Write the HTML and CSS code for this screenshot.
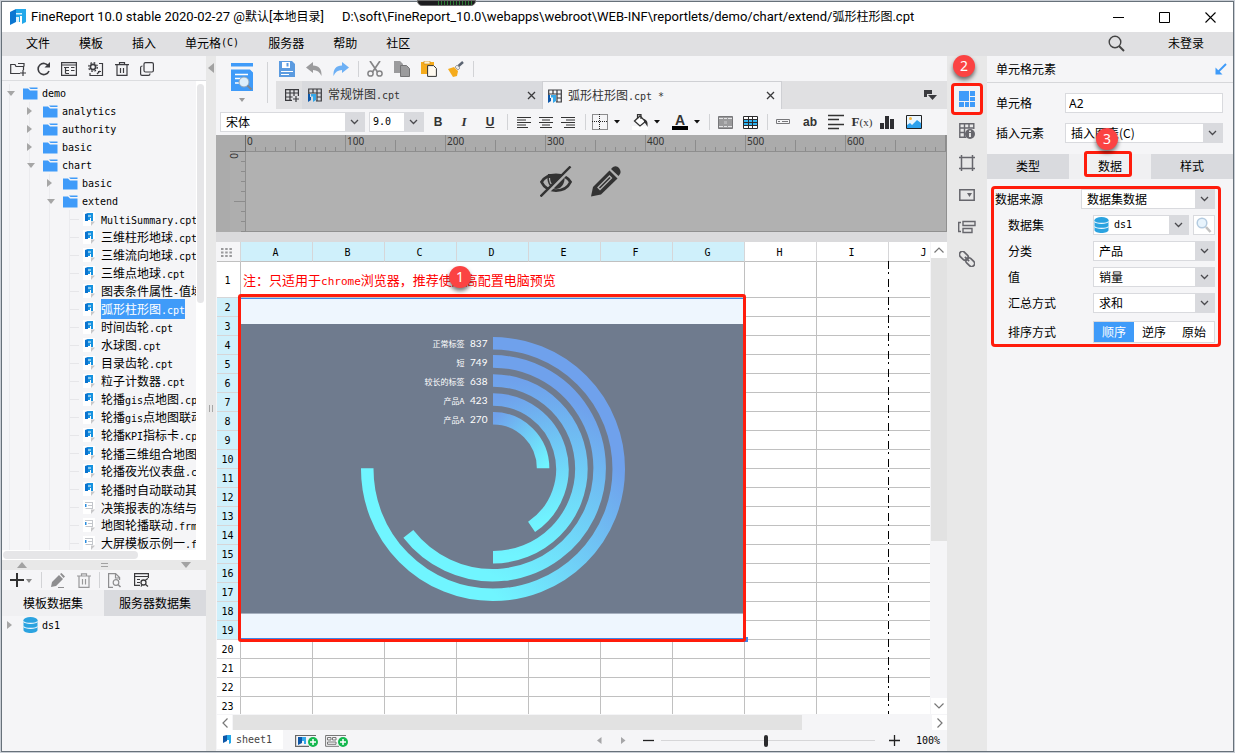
FILE: index.html
```html
<!DOCTYPE html>
<html lang="zh-CN">
<head>
<meta charset="utf-8">
<title>FineReport 10.0</title>
<link rel="stylesheet" href="styles.css">
</head>
<body>
<svg class="defs" aria-hidden="true">
  <symbol id="folder" viewBox="0 0 15 13"><path d="M0 1.500h5l2 2h7.500V12.500H0z" fill="#3f9bf9"/><path d="M6 .500h8.500v1.500H7.500z" fill="#3f9bf9"/></symbol>
  <symbol id="open" viewBox="0 0 8 5"><path d="M0 0h8L4 5z" fill="#a6a6a6"/></symbol>
  <symbol id="closed" viewBox="0 0 5 8"><path d="M0 0v8l5-4z" fill="#a6a6a6"/></symbol>
  <symbol id="cpt" viewBox="0 0 14 14"><path d="M0 0h12v9l-4 5H0z" fill="#fff"/><path d="M12 9.500H8V14z" fill="#c6c6c8"/><path d="M2 2l3-1v8H2z" fill="#0a74d0"/><path d="M5 1h5v8H8V6H7v2H5z" fill="#1592e0"/><path d="M5 3.500h3v1H5z" fill="#fff"/></symbol>
  <symbol id="frm" viewBox="0 0 14 14"><path d="M0 0h12v9l-4 5H0z" fill="#fff"/><path d="M12 9.500H8V14z" fill="#c6c6c8"/><path d="M2 2.500h8M2.500 8.500h7M9.500 3v6M5 5.500h4" stroke="#c3c6cb" fill="none"/><path d="M2 4h1.500v3H2z" fill="#2b8de0"/></symbol>
  <symbol id="chev" viewBox="0 0 9 6"><path d="M1 1l3.500 3.500L8 1" fill="none" stroke="#4a4a4e" stroke-width="1.300"/></symbol>
  <symbol id="x" viewBox="0 0 9 9"><path d="M1 1l7 7M8 1L1 8" stroke="#3a3a3c" stroke-width="1.300"/></symbol>
  <symbol id="drop" viewBox="0 0 6 4"><path d="M0 0h6L3 3.500z" fill="#111"/></symbol>
  <symbol id="sheetgrid" viewBox="0 0 14 14"><path d="M.700 6V1h12.600v12H8M.700 5h12.600M5 1v4M9 1v12M9 9h4" fill="none" stroke="#3a3a3e" stroke-width="1.200"/><path d="M0 6h2v3h1v3l-3 2z" fill="#0d57a8"/><path d="M3 6h5v6l-3 2V8.500H3z" fill="#35a8ea"/></symbol>
  <symbol id="db" viewBox="0 0 14 16"><path d="M0 3v10c0 4 14 4 14 0V3z" fill="#2ba3e0"/><ellipse cx="7" cy="3" rx="7" ry="3" fill="#2ba3e0"/><path d="M0 4.500c2 2.500 12 2.500 14 0M0 9.500c2 2.500 12 2.500 14 0" fill="none" stroke="#f0f8fd" stroke-width="1.100"/></symbol>
  <symbol id="logo" viewBox="0 0 16 16"><path d="M0 3l6-3v13l-6 3z" fill="#0b76d1"/><path d="M6 0h10v13l-4 2V7h-2v6H6z" fill="#23a8ea"/><path d="M6 4h6v1.500H6z" fill="#d9f1fd"/><path d="M6 8h3v8H6z" fill="#fff" opacity=".85"/></symbol>
  <symbol id="plusdot" viewBox="0 0 10 10"><circle cx="5" cy="5" r="5" fill="#14b84f"/><path d="M5 2v6M2 5h6" stroke="#fff" stroke-width="1.500"/></symbol>
</svg>

<div class="window">
  <header class="titlebar">
    <svg class="logo" width="16" height="16"><use href="#logo"/></svg>
    <h1 class="title"><span>FineReport 10.0 stable 2020-02-27 @<b>默认</b>[<b>本地目录</b>]</span><span>D:\soft\FineReport_10.0\webapps\webroot\WEB-INF\reportlets/demo/chart/extend/<b>弧形柱形图</b>.cpt</span></h1>
    <div class="winbtns">
      <button aria-label="最小化"><svg width="11" height="11"><path d="M0 5.500h11" stroke="#000"/></svg></button>
      <button aria-label="最大化"><svg width="11" height="11"><path d="M.500.500h10v10H.500z" fill="none" stroke="#000"/></svg></button>
      <button aria-label="关闭"><svg width="11" height="11"><path d="M.500.500l10 10M10.500.500l-10 10" stroke="#000" stroke-width="1.100"/></svg></button>
    </div>
    <div class="gadget"></div>
  </header>

  <nav class="menubar">
    <button>文件</button><button>模板</button><button>插入</button><button>单元格<span class="m">(C)</span></button><button>服务器</button><button>帮助</button><button>社区</button>
    <button class="search" aria-label="搜索"><svg width="17" height="17"><circle cx="7" cy="7" r="5.800" fill="none" stroke="#444" stroke-width="1.400"/><path d="M11 11l5 5" stroke="#444" stroke-width="2"/></svg></button>
    <button class="login">未登录</button>
  </nav>

  <div class="main">
    <aside class="left">
      <div class="tools top">
        <button aria-label="新建文件夹"><svg width="16" height="14"><path d="M10 11.500H.700V2.500H5l1 2h7.500V8M8 1.500h6v3M13 8v6M10 11h6" fill="none" stroke="#3c3c40" stroke-width="1.200"/></svg></button>
        <button aria-label="刷新"><svg width="13" height="14"><path d="M11.500 4A5.600 5.600 0 1 0 12 9" fill="none" stroke="#3c3c40" stroke-width="1.600"/><path d="M13 0v5.500H7.500z" fill="#3c3c40"/></svg></button>
        <button aria-label="文件"><svg width="16" height="14"><path d="M.600.600h14.800v12.800H.600zM.600 3h14.800M3 5.500h5M4.500 5.500v6M4.500 8.500H8M4.500 11.500H8M10 5.500h3.500M10 8.500h3.500" fill="none" stroke="#3c3c40" stroke-width="1.200"/></svg></button>
        <button aria-label="设置"><svg width="16" height="14"><circle cx="5" cy="5" r="2.600" fill="none" stroke="#3c3c40" stroke-width="1.600"/><circle cx="5" cy="5" r="4.300" fill="none" stroke="#3c3c40" stroke-width="1.300" stroke-dasharray="1.700 1.700"/><path d="M11 1.500h3.500v12H2V11M10 9.500h3M9 12l3-3" fill="none" stroke="#3c3c40" stroke-width="1.200"/></svg></button>
        <button aria-label="删除"><svg width="14" height="14"><path d="M0 2.600h14M4.500 2.500V.600h5v1.900M2 3v10.400h10V3M5.500 6v5M8.500 6v5" fill="none" stroke="#3c3c40" stroke-width="1.200"/></svg></button>
        <button aria-label="复制"><svg width="14" height="14"><rect x="4" y=".600" width="9.400" height="9.400" rx="1.500" fill="none" stroke="#3c3c40" stroke-width="1.200"/><path d="M2.500 4Q.600 4 .600 5.500V12q0 1.400 1.400 1.400h6.500q1.500 0 1.500-1.900" fill="none" stroke="#3c3c40" stroke-width="1.200"/></svg></button>
      </div>
      <div class="treebox">
        <div class="tree">
          <ul>
            <li><div class="row"><i><svg width="8" height="5"><use href="#open"/></svg></i><svg width="15" height="13"><use href="#folder"/></svg><span class="m">demo</span></div>
              <ul>
                <li><div class="row"><i><svg width="5" height="8"><use href="#closed"/></svg></i><svg width="15" height="13"><use href="#folder"/></svg><span class="m">analytics</span></div></li>
                <li><div class="row"><i><svg width="5" height="8"><use href="#closed"/></svg></i><svg width="15" height="13"><use href="#folder"/></svg><span class="m">authority</span></div></li>
                <li><div class="row"><i><svg width="5" height="8"><use href="#closed"/></svg></i><svg width="15" height="13"><use href="#folder"/></svg><span class="m">basic</span></div></li>
                <li><div class="row"><i><svg width="8" height="5"><use href="#open"/></svg></i><svg width="15" height="13"><use href="#folder"/></svg><span class="m">chart</span></div>
                  <ul>
                    <li><div class="row"><i><svg width="5" height="8"><use href="#closed"/></svg></i><svg width="15" height="13"><use href="#folder"/></svg><span class="m">basic</span></div></li>
                    <li><div class="row"><i><svg width="8" height="5"><use href="#open"/></svg></i><svg width="15" height="13"><use href="#folder"/></svg><span class="m">extend</span></div>
                      <ul class="files">
                        <li class="row"><i></i><svg width="14" height="14"><use href="#cpt"/></svg><span><b class="m">MultiSummary.cpt</b></span></li>
                        <li class="row"><i></i><svg width="14" height="14"><use href="#cpt"/></svg><span>三维柱形地球<b class="m">.cpt</b></span></li>
                        <li class="row"><i></i><svg width="14" height="14"><use href="#cpt"/></svg><span>三维流向地球<b class="m">.cpt</b></span></li>
                        <li class="row"><i></i><svg width="14" height="14"><use href="#cpt"/></svg><span>三维点地球<b class="m">.cpt</b></span></li>
                        <li class="row"><i></i><svg width="14" height="14"><use href="#cpt"/></svg><span>图表条件属性<b class="m">-</b>值域</span></li>
                        <li class="row"><i></i><svg width="14" height="14"><use href="#cpt"/></svg><span class="sel">弧形柱形图<b class="m">.cpt</b></span></li>
                        <li class="row"><i></i><svg width="14" height="14"><use href="#cpt"/></svg><span>时间齿轮<b class="m">.cpt</b></span></li>
                        <li class="row"><i></i><svg width="14" height="14"><use href="#cpt"/></svg><span>水球图<b class="m">.cpt</b></span></li>
                        <li class="row"><i></i><svg width="14" height="14"><use href="#cpt"/></svg><span>目录齿轮<b class="m">.cpt</b></span></li>
                        <li class="row"><i></i><svg width="14" height="14"><use href="#cpt"/></svg><span>粒子计数器<b class="m">.cpt</b></span></li>
                        <li class="row"><i></i><svg width="14" height="14"><use href="#cpt"/></svg><span>轮播<b class="m">gis</b>点地图<b class="m">.cpt</b></span></li>
                        <li class="row"><i></i><svg width="14" height="14"><use href="#cpt"/></svg><span>轮播<b class="m">gis</b>点地图联动</span></li>
                        <li class="row"><i></i><svg width="14" height="14"><use href="#cpt"/></svg><span>轮播<b class="m">KPI</b>指标卡<b class="m">.cpt</b></span></li>
                        <li class="row"><i></i><svg width="14" height="14"><use href="#cpt"/></svg><span>轮播三维组合地图</span></li>
                        <li class="row"><i></i><svg width="14" height="14"><use href="#cpt"/></svg><span>轮播夜光仪表盘<b class="m">.cpt</b></span></li>
                        <li class="row"><i></i><svg width="14" height="14"><use href="#cpt"/></svg><span>轮播时自动联动其</span></li>
                        <li class="row"><i></i><svg width="14" height="14"><use href="#frm"/></svg><span>决策报表的冻结与</span></li>
                        <li class="row"><i></i><svg width="14" height="14"><use href="#frm"/></svg><span>地图轮播联动<b class="m">.frm</b></span></li>
                        <li class="row"><i></i><svg width="14" height="14"><use href="#frm"/></svg><span>大屏模板示例一<b class="m">.frm</b></span></li>
                      </ul>
                    </li>
                  </ul>
                </li>
              </ul>
            </li>
          </ul>
        </div>
        <div class="vbar"><div></div></div>
      </div>
      <div class="hbar"><div></div></div>
      <div class="hsplit"><svg width="10" height="6"><path d="M0 6h10L5 0z" fill="#a2a2a2"/></svg><svg width="7" height="5"><path d="M0 .500h7M0 3.500h7" stroke="#a2a2a2"/></svg><svg width="10" height="6"><path d="M0 0h10L5 6z" fill="#a2a2a2"/></svg></div>
      <section class="datasets">
        <div class="tools ds">
          <button aria-label="添加"><svg width="23" height="14"><path d="M7 0v14M0 7h14" stroke="#333" stroke-width="2"/><path d="M16 6h6l-3 4z" fill="#8a8a8a"/></svg></button>
          <span class="vsep"></span>
          <button aria-label="编辑"><svg width="15" height="15"><path d="M1 14l1-5 7-7 4 4-7 7zM10 1l1.500-1L15 3.500 13.500 5z" fill="#8e8e90"/><path d="M8 14.500h6" stroke="#8e8e90"/></svg></button>
          <button aria-label="删除"><svg width="14" height="15"><path d="M0 3h14M4.500 3V.800h5V3M2 3.500v10.800h10V3.500M5.500 6v5.500M8.500 6v5.500" fill="none" stroke="#98989a" stroke-width="1.200"/></svg></button>
          <span class="vsep"></span>
          <button aria-label="预览"><svg width="14" height="15"><path d="M5 14.400H.600V.600h7l4 4V7M7.500.600V5H12" fill="none" stroke="#8e8e90" stroke-width="1.200"/><circle cx="8" cy="9.500" r="2.800" fill="none" stroke="#8e8e90" stroke-width="1.200"/><path d="M10 11.500l2.500 2.500" stroke="#8e8e90" stroke-width="1.600"/></svg></button>
          <button aria-label="连接"><svg width="15" height="14"><path d="M6 12.400H.600V.600h13.800V5M.600 3.500h13.800M3 6.500h3M3 9.500h3" fill="none" stroke="#3a3a3c" stroke-width="1.200"/><circle cx="9.500" cy="9.500" r="2.500" fill="none" stroke="#3a3a3c" stroke-width="1.300"/><path d="M11.500 7l2.500-1.500M8 12l-1 1.500M11 11l3 2.500" stroke="#3a3a3c" stroke-width="1.300"/></svg></button>
        </div>
        <div class="dstabs"><button class="on">模板数据集</button><button>服务器数据集</button></div>
        <div class="row dsrow"><i><svg width="5" height="8"><use href="#closed"/></svg></i><svg width="15" height="16"><use href="#db"/></svg><span class="m">ds1</span></div>
      </section>
    </aside>

    <div class="vsplit"><svg class="collapse" width="6" height="10"><path d="M6 0v10L0 5z" fill="#a2a2a2"/></svg><svg class="grip" width="4" height="7"><path d="M.500 0v7M3.500 0v7" stroke="#a6a6a6"/></svg></div>

    <main class="center">
      <div class="ribbon">
        <button class="preview" aria-label="预览"><svg width="22" height="28"><path d="M0 0h22v3.500H0zM0 6.500h19l3 3V28H0z" fill="#3f9bf9"/><path d="M4 11.500h13M4 15.500h6M4 20h5" stroke="#fff" stroke-width="1.600"/><circle cx="13" cy="19" r="5" fill="#dceefb" stroke="#8fa4b8"/><path d="M16.500 22.500l4 4" stroke="#7b8794" stroke-width="2"/></svg><svg width="6" height="4"><path d="M0 0h6L3 4z" fill="#9a9a9a"/></svg></button>
        <div class="ribmain">
          <div class="quick">
            <button aria-label="保存"><svg width="16" height="16"><path d="M0 0h13l3 3v13H0z" fill="#5b9be0"/><path d="M3 1h8v6H3z" fill="#fff"/><path d="M7.500 2h2v3.500h-2z" fill="#5b9be0"/><path d="M2 10.500h12M2 13.500h8" stroke="#fff" stroke-width="1.200"/></svg></button>
            <button aria-label="撤销"><svg width="16" height="16"><path d="M0 6.500L7 1v3.500c6 0 9 4 8.500 10.500C14 11 11 9 7 9v3z" fill="#9b9b9d"/></svg></button>
            <button aria-label="重做"><svg width="16" height="16"><path d="M16 6.500L9 1v3.500C3 4.500 0 8.500.500 15 2 11 5 9 9 9v3z" fill="#6db0f5"/></svg></button>
            <span class="vsep"></span>
            <button aria-label="剪切"><svg width="16" height="16"><path d="M3 0l7.500 11M13 0L5.500 11" stroke="#858587" stroke-width="1.700"/><circle cx="3.500" cy="12.500" r="2.600" fill="none" stroke="#858587" stroke-width="1.500"/><circle cx="12.500" cy="12.500" r="2.600" fill="none" stroke="#858587" stroke-width="1.500"/></svg></button>
            <button aria-label="复制"><svg width="16" height="16"><path d="M0 0h6l3 3v9H0z" fill="#9b9b9d"/><path d="M6.500 4.500h6l3 3v8h-9z" fill="#9b9b9d" stroke="#747476"/></svg></button>
            <button aria-label="粘贴"><svg width="16" height="16"><path d="M0 1h13v12H0z" fill="#f5ab1c"/><path d="M3 0h6v3H3z" fill="#fff1cf" stroke="#c9850f" stroke-width=".600"/><path d="M6.600 4.600h6l2.800 2.800v8H6.600z" fill="#fffaf0" stroke="#333"/></svg></button>
            <button aria-label="格式刷"><svg width="16" height="16"><path d="M0 8l6-2 4 4-1 5-4 1z" fill="#f5ab1c"/><path d="M7 6l3 3 2-2-3-3z" fill="#e8e8e8" stroke="#777" stroke-width=".600"/><path d="M10.500 5L15 1" stroke="#5b6472" stroke-width="2.500"/></svg></button>
            <span class="vsep"></span>
          </div>
          <div class="tabs">
            <button class="newtab" aria-label="新建"><svg width="14" height="14"><path d="M7 12.400H.600V1.600h12.800V8M.600 5h12.800M.600 9h7M5 1.600v10.800M9 1.600V8M11 8v6M8 11h6" fill="none" stroke="#3a3a3e" stroke-width="1.200"/></svg></button>
            <div class="tab"><svg width="14" height="14"><use href="#sheetgrid"/></svg><span>常规饼图<span class="m">.cpt</span></span><button aria-label="关闭"><svg width="9" height="9"><use href="#x"/></svg></button></div>
            <div class="tab on"><svg width="14" height="14"><use href="#sheetgrid"/></svg><span>弧形柱形图<span class="m">.cpt *</span></span><button aria-label="关闭"><svg width="9" height="9"><use href="#x"/></svg></button></div>
            <button class="more" aria-label="更多"><svg width="13" height="11"><path d="M0 0h8v4H3v3H0z" fill="#3a3a3e"/><path d="M4 5h9l-4.500 5z" fill="#3a3a3e"/></svg></button>
          </div>
        </div>
      </div>

      <div class="format">
        <div class="combo font"><select aria-label="字体"><option>宋体</option></select><svg width="9" height="6"><use href="#chev"/></svg></div>
        <div class="combo size"><select class="m" aria-label="字号"><option>9.0</option></select><svg width="9" height="6"><use href="#chev"/></svg></div>
        <div class="grp biu"><button class="b">B</button><button class="i">I</button><button class="u">U</button></div>
        <span class="vsep"></span>
        <div class="grp al">
          <button aria-label="左对齐"><svg width="14" height="11"><path d="M0 .500h14M0 3h9M0 5.500h14M0 8h9M0 10.500h11" stroke="#333"/></svg></button>
          <button aria-label="居中"><svg width="14" height="11"><path d="M0 .500h14M3 3h8M0 5.500h14M3 8h8M1 10.500h12" stroke="#333"/></svg></button>
          <button aria-label="右对齐"><svg width="14" height="11"><path d="M0 .500h14M5 3h9M0 5.500h14M5 8h9M3 10.500h11" stroke="#333"/></svg></button>
        </div>
        <span class="vsep"></span>
        <div class="grp dd">
          <button aria-label="边框"><svg width="16" height="16"><path d="M.500.500h15v15H.500zM7.500 0v16M0 7.500h16" fill="none" stroke="#222" stroke-dasharray="1 1"/></svg><svg width="6" height="4"><use href="#drop"/></svg></button>
          <button aria-label="填充"><svg width="16" height="16"><path d="M0 12h16v4H0z" fill="#fff"/><path d="M8 2l5.500 5.500L8 12 2.500 7z" fill="#fff" stroke="#333" stroke-width="1.300"/><path d="M5.500 5V.700h3.500V5" fill="none" stroke="#333" stroke-width="1.200"/><path d="M12 5c3 1 4 3 3.500 8C14 10 13 9 12 8z" fill="#333"/></svg><svg width="6" height="4"><use href="#drop"/></svg></button>
          <button aria-label="文字颜色"><span class="acol">A</span><svg width="6" height="4"><use href="#drop"/></svg></button>
        </div>
        <span class="vsep"></span>
        <div class="grp cells">
          <button aria-label="合并"><svg width="15" height="13"><path d="M.500.500h14v12H.500z" fill="#9a9a9c" stroke="#77777a"/><path d="M1 2h4v1H1zM6 2h3v1H6zM10 2h4v1h-4zM1 10h4v1H1zM6 10h3v1H6zM10 10h4v1h-4z" fill="#e4e4e6"/><path d="M6 5h3v3H6z" fill="#b4b4b6"/></svg></button>
          <button aria-label="拆分"><svg width="15" height="13"><path d="M0 0h15v13H0z" fill="#fff"/><path d="M0 4h15v6H0z" fill="#2fb4f2"/><path d="M.500.500h14v12H.500zM0 3.500h15M0 6.500h15M0 9.500h15M5.500 0v13M9.500 0v13" fill="none" stroke="#2a2a2c"/></svg></button>
        </div>
        <span class="vsep"></span>
        <div class="grp ins">
          <button aria-label="控件"><svg width="16" height="16"><path d="M.500 5.500h13v4H.500zM2 7.500h2M6 7.500h6" fill="none" stroke="#77777a"/></svg></button>
          <button class="ab">ab</button>
          <button aria-label="段落"><svg width="16" height="16"><path d="M0 1.500h16M0 5.500h11M0 10.500h16M0 14.500h11" stroke="#333" stroke-width="1.500"/></svg></button>
          <button class="fx">F<small>(x)</small></button>
          <button aria-label="图表"><svg width="16" height="16"><path d="M0 9h4v6H0zM5 2h4v13H5zM10 5h4v10h-4z" fill="#2e2e32"/></svg></button>
          <button aria-label="图片"><svg width="16" height="16"><path d="M.500 1.500h15v13H.500z" fill="#eaf6ff" stroke="#222"/><path d="M1 11l3-2 2 2 5-5 4 3v5H1z" fill="#2ea2ee"/><circle cx="4.500" cy="4.500" r="1.500" fill="#f5b53c"/></svg></button>
        </div>
      </div>

      <div class="param">
        <div class="gutter"></div>
        <div class="ruler-h"><span>0</span><span>100</span><span>200</span><span>300</span><span>400</span><span>500</span><span>600</span></div>
        <div class="ruler-v"><span>0</span></div>
        <div class="canvas">
          <svg width="32" height="31" viewBox="0 0 32 31"><path d="M1.500 16C7 6.500 25 6.500 30.500 16 25 27.500 7 27.500 1.500 16z" fill="none" stroke="#333" stroke-width="2.800"/><path d="M8 8h16c2 6-1 15-8 15S6 14 8 8z" fill="#333"/><path d="M9.500 12q0 5 3 7" stroke="#b1b1b1" stroke-width="1.200" fill="none"/><path d="M3 31L33 1" stroke="#b1b1b1" stroke-width="3"/><path d="M.500 30.500l30-30" stroke="#333" stroke-width="2.400"/></svg>
          <svg width="30" height="31" viewBox="0 0 30 31"><path d="M0 30.500L2 21 18.500 4.500l8 8L10 28.500z" fill="#333"/><path d="M20 3l2-2q3.500-2 6 1t1 6l-1.500 2z" fill="#333"/><path d="M7 21.500L18.500 10l2 2L9 23.500z" fill="none" stroke="#b1b1b1" stroke-width="1.300"/></svg>
        </div>
      </div>

      <div class="sheetbox">
        <div class="sheet">
          <table>
            <colgroup><col class="c0"><col span="10"></colgroup>
            <tr class="head"><th class="corner"><svg width="11" height="9"><path d="M0 1h11M0 4.500h11M0 8h11" stroke="#9a9a9c" stroke-width="2" stroke-dasharray="2.500 1.700"/></svg></th><th class="hot">A</th><th class="hot">B</th><th class="hot">C</th><th class="hot">D</th><th class="hot">E</th><th class="hot">F</th><th class="hot">G</th><th>H</th><th>I</th><th>J</th></tr>
            <tr class="first"><th>1</th><td colspan="7" class="note">注：只适用于<span>chrome</span>浏览器，推荐使用高配置电脑预览<em class="badge b1">1</em></td><td></td><td></td><td></td></tr>
            <tr><th class="hot">2</th><td class="chart" colspan="7" rowspan="18">
              <svg viewBox="0 0 503 289" role="img" aria-label="弧形柱形图">
                <defs>
                  <linearGradient id="g1" gradientUnits="userSpaceOnUse" x1="252" y1="19" x2="127" y2="144"><stop stop-color="#6fa1ec"/><stop offset="1" stop-color="#70f5ff"/></linearGradient>
                  <linearGradient id="g2" gradientUnits="userSpaceOnUse" x1="252" y1="37" x2="167" y2="210"><stop stop-color="#6fa1ec"/><stop offset="1" stop-color="#70f5ff"/></linearGradient>
                  <linearGradient id="g3" gradientUnits="userSpaceOnUse" x1="252" y1="56" x2="252" y2="232"><stop stop-color="#6fa1ec"/><stop offset="1" stop-color="#70f5ff"/></linearGradient>
                  <linearGradient id="g4" gradientUnits="userSpaceOnUse" x1="252" y1="75" x2="290" y2="202"><stop stop-color="#6fa1ec"/><stop offset="1" stop-color="#70f5ff"/></linearGradient>
                  <linearGradient id="g5" gradientUnits="userSpaceOnUse" x1="252" y1="94" x2="302" y2="144"><stop stop-color="#6fa1ec"/><stop offset="1" stop-color="#70f5ff"/></linearGradient>
                </defs>
                <rect width="503" height="289" fill="#6f7b8e"/>
                <g fill="none" stroke-width="12.500">
                  <path d="M251.500 19.300A125.500 125.500 0 1 1 126 144" stroke="url(#g1)"/>
                  <path d="M251.500 37.300A106.700 106.700 0 1 1 167 209.500" stroke="url(#g2)"/>
                  <path d="M251.500 56.300A88 88 0 0 1 251.500 232.800" stroke="url(#g3)"/>
                  <path d="M251.500 75.300A69.500 69.500 0 0 1 290 202.500" stroke="url(#g4)"/>
                  <path d="M251.500 94A50 50 0 0 1 301.500 144" stroke="url(#g5)"/>
                </g>
                <g class="lbl"><text x="223" y="23">正常标签</text><text x="223" y="42">短</text><text x="223" y="61">较长的标签</text><text x="223" y="80">产品A</text><text x="223" y="99">产品A</text></g>
                <g class="num"><text x="246" y="23">837</text><text x="246" y="42">749</text><text x="246" y="61">638</text><text x="246" y="80">423</text><text x="246" y="99">270</text></g>
              </svg></td><td></td><td></td><td></td></tr>
            <tr><th class="hot">3</th><td></td><td></td><td></td></tr>
            <tr><th class="hot">4</th><td></td><td></td><td></td></tr>
            <tr><th class="hot">5</th><td></td><td></td><td></td></tr>
            <tr><th class="hot">6</th><td></td><td></td><td></td></tr>
            <tr><th class="hot">7</th><td></td><td></td><td></td></tr>
            <tr><th class="hot">8</th><td></td><td></td><td></td></tr>
            <tr><th class="hot">9</th><td></td><td></td><td></td></tr>
            <tr><th class="hot">10</th><td></td><td></td><td></td></tr>
            <tr><th class="hot">11</th><td></td><td></td><td></td></tr>
            <tr><th class="hot">12</th><td></td><td></td><td></td></tr>
            <tr><th class="hot">13</th><td></td><td></td><td></td></tr>
            <tr><th class="hot">14</th><td></td><td></td><td></td></tr>
            <tr><th class="hot">15</th><td></td><td></td><td></td></tr>
            <tr><th class="hot">16</th><td></td><td></td><td></td></tr>
            <tr><th class="hot">17</th><td></td><td></td><td></td></tr>
            <tr><th class="hot">18</th><td></td><td></td><td></td></tr>
            <tr><th class="hot">19</th><td></td><td></td><td></td></tr>
            <tr><th>20</th><td></td><td></td><td></td><td></td><td></td><td></td><td></td><td></td><td></td><td></td></tr>
            <tr><th>21</th><td></td><td></td><td></td><td></td><td></td><td></td><td></td><td></td><td></td><td></td></tr>
            <tr><th>22</th><td></td><td></td><td></td><td></td><td></td><td></td><td></td><td></td><td></td><td></td></tr>
            <tr><th>23</th><td></td><td></td><td></td><td></td><td></td><td></td><td></td><td></td><td></td><td></td></tr>
          </table>
          <div class="pagebreak"></div>
        </div>
        <div class="vscroll"><button aria-label="上"><svg width="10" height="6"><path d="M.500 5.500l4.500-4.500 4.500 4.500" fill="none" stroke="#777" stroke-width="1.200"/></svg></button><div></div><button aria-label="下"><svg width="10" height="6"><path d="M.500.500L5 5l4.500-4.500" fill="none" stroke="#777" stroke-width="1.200"/></svg></button></div>
      </div>
      <div class="hscroll"><button aria-label="左"><svg width="6" height="10"><path d="M5.500.500L1 5l4.500 4.500" fill="none" stroke="#777" stroke-width="1.200"/></svg></button><div></div><button aria-label="右"><svg width="6" height="10"><path d="M.500.500L5 5 .500 9.500" fill="none" stroke="#777" stroke-width="1.200"/></svg></button></div>

      <footer class="status">
        <button class="sheettab"><svg width="9" height="9"><path d="M0 1l4-1v6l-4 2z" fill="#0d57a8"/><path d="M4 0h4v8L6 9V5H4z" fill="#23a8ea"/></svg><span class="m">sheet1</span></button>
        <button aria-label="新建报表"><svg width="23" height="13"><path d="M21 1.500H.600v10.800H14" fill="none" stroke="#666" stroke-width="1.200"/><path d="M3 3h4v6l-4 2z" fill="#0d57a8"/><path d="M7 3h4v7H9V7H7z" fill="#35a8ea"/><use href="#plusdot" x="13" y="3" width="10" height="10"/></svg></button>
        <button aria-label="新建表单"><svg width="23" height="13"><path d="M21 1.500H.600v10.800H14M2.500 3.500h3.500v2.500H2.500zM7.500 3.500h3.500v2.500H7.500zM2.500 8h8.500v2.300H2.500z" fill="none" stroke="#777"/><use href="#plusdot" x="13" y="3" width="10" height="10"/></svg></button>
        <div class="zoom">
          <button aria-label="前一页"><svg width="5" height="7"><path d="M4.500 0v7L0 3.500z" fill="#a6a6a8"/></svg></button>
          <button class="next" aria-label="后一页"><svg width="5" height="7"><path d="M0 0v7l4.500-3.500z" fill="#a6a6a8"/></svg></button>
          <button class="minus" aria-label="缩小"><svg width="11" height="11"><path d="M0 5.500h11" stroke="#222" stroke-width="1.300"/></svg></button>
          <input type="range" min="0" max="100" value="49" aria-label="缩放">
          <button class="plus" aria-label="放大"><svg width="11" height="11"><path d="M0 5.500h11M5.500 0v11" stroke="#222" stroke-width="1.300"/></svg></button>
          <span class="m">100%</span>
        </div>
      </footer>
    </main>

    <nav class="strip">
      <em class="badge b2">2</em>
      <button class="on" aria-label="单元格元素"><svg width="16" height="16"><path d="M0 0h10v10H0zM11 0h5v5h-5zM11 6h5v4h-5zM0 11h5v5H0zM6 11h4v5H6zM11 11h5v5h-5z" fill="#3f9bf9"/></svg></button>
      <button aria-label="单元格属性"><svg width="16" height="16"><path d="M7 14.300H.800V.800h14V6M.800 5h14M.800 9.500H6M5.500 1v13M10 1v4" fill="none" stroke="#66666c" stroke-width="1.400"/><circle cx="11" cy="11" r="5" fill="#66666c"/><path d="M11 7.500v1.500M11 10v4" stroke="#fff" stroke-width="1.600"/></svg></button>
      <button aria-label="悬浮元素"><svg width="16" height="16"><path d="M2.500 0v16M13.500 0v16M0 2.500h16M0 13.500h16" stroke="#66666c" stroke-width="1.500"/></svg></button>
      <button aria-label="控件设置"><svg width="16" height="16"><path d="M.800 2.800h14.400v10.400H.800z" fill="none" stroke="#66666c" stroke-width="1.500"/><path d="M8 6h5l-2.500 4z" fill="#66666c"/></svg></button>
      <button aria-label="条件属性"><svg width="18" height="14"><path d="M3 2.500H.700v9H3M5 1.500h12v4H5zM5 8.500h9v4H5z" fill="none" stroke="#66666c" stroke-width="1.400"/></svg></button>
      <button aria-label="超级链接"><svg width="16" height="16"><g transform="rotate(45 8 8)" fill="none" stroke="#66666c" stroke-width="1.700"><rect x="-1.500" y="5" width="10" height="6" rx="3"/><rect x="7.500" y="5" width="10" height="6" rx="3"/><path d="M5 8h6"/></g></svg></button>
    </nav>

    <aside class="props">
      <div class="phead"><h2>单元格元素</h2><svg width="12" height="12"><path d="M11 1L3 9" stroke="#3f9bf9" stroke-width="2"/><path d="M.500 4.500v7h7z" fill="#3f9bf9"/></svg></div>
      <div class="fields">
        <label for="cell">单元格</label><input id="cell" value="A2">
        <label for="ins">插入元素</label>
        <div class="combo"><select id="ins"><option>插入图表(C)</option></select><svg width="9" height="6"><use href="#chev"/></svg><em class="badge b3">3</em></div>
      </div>
      <div class="ptabs"><button>类型</button><button class="on"><span>数据</span></button><button>样式</button></div>
      <section class="databox">
        <div class="f"><label for="src">数据来源</label><div class="combo wide"><select id="src"><option>数据集数据</option></select><svg width="9" height="6"><use href="#chev"/></svg></div></div>
        <div class="f sub"><label for="ds">数据集</label><div class="pair"><div class="combo dsc"><select id="ds" class="m"><option>ds1</option></select><svg class="dbi" width="15" height="16"><use href="#db"/></svg><svg width="9" height="6"><use href="#chev"/></svg></div><button class="look" aria-label="预览"><svg width="16" height="16"><circle cx="6" cy="6" r="4.800" fill="#e8f4fd" stroke="#b4cbe0" stroke-width="1.500"/><path d="M10 10l4.500 5" stroke="#c2c2c2" stroke-width="2.600"/></svg></button></div></div>
        <div class="f sub"><label for="cat">分类</label><div class="combo"><select id="cat"><option>产品</option></select><svg width="9" height="6"><use href="#chev"/></svg></div></div>
        <div class="f sub"><label for="val">值</label><div class="combo"><select id="val"><option>销量</option></select><svg width="9" height="6"><use href="#chev"/></svg></div></div>
        <div class="f sub"><label for="sum">汇总方式</label><div class="combo"><select id="sum"><option>求和</option></select><svg width="9" height="6"><use href="#chev"/></svg></div></div>
        <div class="f sub sort"><span>排序方式</span><div class="seg"><button class="on">顺序</button><button>逆序</button><button>原始</button></div></div>
      </section>
    </aside>
  </div>
</div>
</body>
</html>
```
FILE: styles.css
```css
* { box-sizing: border-box; }
html, body { height: 100%; }
body {
  margin: 0;
  padding: 1px;
  background: #c8cdd4;
  color: #000;
  font: 12px/18px "Noto Sans CJK SC", sans-serif;
  overflow: hidden;
}
button, select, input { font: inherit; color: inherit; margin: 0; }
button { border: 0; padding: 0; background: none; display: flex; align-items: center; justify-content: center; white-space: nowrap; }
svg { display: block; flex: none; }
ul { list-style: none; margin: 0; padding: 0; }
h1, h2 { margin: 0; font: inherit; }
em { font-style: normal; }
.m { font-family: "DejaVu Sans Mono", monospace; font-size: 10px; font-weight: 400; }
.defs { position: absolute; width: 0; height: 0; }
.vsep { width: 1px; height: 16px; background: #d2d3d6; flex: none; }

.window { height: 100%; border: 1px solid #67717a; display: flex; flex-direction: column; background: #f5f5f7; }

.titlebar { position: relative; height: 30px; flex: none; background: #fff; display: flex; align-items: center; padding: 0 17px 0 8px; }
.title { margin-left: 5px; display: flex; gap: 18px; flex: 1; font-family: Roboto, "Noto Sans CJK SC", sans-serif; font-size: 13px; white-space: nowrap; }
.title b { font-size: 12px; font-weight: 400; }
.winbtns { display: flex; gap: 35px; }
.gadget { position: absolute; left: 415px; top: -2px; width: 59px; height: 6px; border: 1px solid #6b6b6b; border-radius: 0 0 5px 5px; background: repeating-linear-gradient(90deg, #2c7a33 0 1px, #1d1d1f 1px 3px) 20px 0 / 34px 4px no-repeat #1d1d1f; }

.menubar { height: 24px; flex: none; background: #e0e0e2; display: flex; gap: 29px; align-items: center; padding: 0 29px 2px 24px; }
.menubar .search { margin-left: auto; }
.menubar .login { margin-left: 14px; }

.main { flex: 1; min-height: 0; display: flex; }

.left { width: 204px; flex: none; display: flex; flex-direction: column; }
.tools { display: flex; align-items: center; flex: none; }
.top { height: 25px; gap: 11px; padding: 1px 8px 0; border-bottom: 1px solid #dcdde0; }
.treebox { flex: 1; min-height: 0; display: flex; }
.tree { flex: 1; overflow: hidden; padding: 3px 0 0 4px; white-space: nowrap; min-width: 0; }
.tree ul { background: linear-gradient(#ebebee, #ebebee) 3px 0 / 1px 100% no-repeat; }
.tree ul ul { margin-left: 20px; }
.row { height: 18px; display: flex; align-items: center; gap: 4px; }
.row > span { line-height: 16px; padding-top: 2px; }
.row i { width: 13px; flex: none; }
.row i svg { margin: 0 1px; }
.tree .files .row i { height: 1px; background: linear-gradient(#e6e6e9, #e6e6e9) 4px 0 / 9px 1px no-repeat; }
.row b { font-weight: 400; }
.sel { background: #3f9bf9; color: #fff; }
.vbar { width: 10px; background: #fff; padding: 3px 2px 0 1px; }
.vbar div { height: 47%; background: #e6e6e8; border-radius: 4px; }
.hbar { height: 10px; padding: 1px; background: #fff; flex: none; }
.hbar div { width: 67%; height: 8px; border-radius: 4px; background: #e6e6e8; }
.hsplit { height: 10px; flex: none; background: #e8e8e8; display: flex; justify-content: space-between; align-items: center; padding: 0 15px; }
.datasets { height: 181px; flex: none; }
.ds { height: 20px; padding: 0 8px; gap: 12px; }
.ds .vsep { margin: 0 -4px; }
.dstabs { display: grid; grid-template-columns: 1fr 1fr; height: 26px; }
.dstabs button { background: #d9dade; }
.dstabs .on { background: #f0f0f2; }
.dsrow { padding-left: 4px; }

.vsplit { width: 10px; flex: none; background: #e8e8e8; display: flex; flex-direction: column; align-items: center; padding-top: 7px; }
.vsplit .grip { margin-top: 332px; }

.center { flex: 1; min-width: 0; display: flex; flex-direction: column; }
.ribbon { height: 53px; flex: none; display: flex; }
.preview { width: 52px; flex-direction: column; gap: 7px; margin: 6px 8px 6px 0; border-right: 1px solid #d2d3d6; justify-content: flex-start; padding-top: 1px; }
.ribmain { flex: 1; min-width: 0; display: flex; flex-direction: column; }
.quick { height: 25px; display: flex; align-items: center; gap: 11px; padding-left: 3px; }
.quick .vsep { margin: 0 -3px 0 -2px; }
.tabs { height: 28px; display: flex; background: #e0e0e2; }
.newtab { width: 26px; padding-left: 5px; }
.tab { width: 240px; display: flex; align-items: center; gap: 6px; padding: 0 6px; background: #d9dade; color: #333; }
.tab.on { background: #f5f5f7; border: solid #cfd0d4; border-width: 1px 1px 0; padding-left: 5px; }
.tab button { margin-left: auto; }
.more { margin-left: auto; padding-right: 10px; }

.format { height: 26px; flex: none; display: flex; align-items: center; padding: 0 0 0 4px; }
.combo { display: grid; align-items: center; position: relative; }
.combo > * { grid-area: 1 / 1; }
.combo > svg { justify-self: end; margin-right: 6px; pointer-events: none; }
.combo select { appearance: none; width: 100%; height: 20px; border: 1px solid #d9dade; border-radius: 0; padding: 0 20px 0 5px; background: linear-gradient(#d9dade, #d9dade) right / 19px 100% no-repeat #fff; }
.font { width: 145px; flex: none; }
.size { width: 55px; flex: none; margin-left: 4px; }
.size select { padding-left: 3px; }
.grp { display: flex; align-items: center; flex: none; }
.grp button { color: #333; flex: none; }
.biu { padding: 0 4px 0 1px; font-family: "Liberation Sans", sans-serif; }
.biu button { width: 26px; font-weight: 700; font-size: 12px; }
.biu .i { font-family: "Liberation Serif", serif; font-style: italic; font-size: 13px; }
.biu .u { text-decoration: underline; }
.al { gap: 8px; padding: 0 10px 0 9px; }
.dd { gap: 12px; padding: 0 9px 0 6px; }
.dd button { gap: 6px; }
.acol { width: 16px; height: 16px; border-bottom: 4px solid #000; font: 700 14px/13px "Liberation Sans", sans-serif; }
.cells { gap: 10px; padding: 0 9px 0 8px; }
.ins { gap: 10px; padding-left: 8px; }
.ins button { width: 16px; height: 16px; }
.ins .ab { font: 700 12px/16px "Liberation Sans", sans-serif; }
.ins .fx { font: 700 13px/16px "Liberation Serif", serif; }
.fx small { font-size: 11px; font-weight: 400; }

.param { height: 97px; flex: none; display: grid; grid-template: 17px 1fr / 14px 16px 1fr; background: #ababab; border-right: 1px solid #909090; }
.gutter { grid-area: 1 / 1 / 3 / 2; }
.ruler-h { grid-area: 1 / 3; display: flex; overflow: hidden; border-bottom: 1px solid #8e8e8e; border-left: 1px solid #6d6d6d; margin-left: -1px;
  background:
    repeating-linear-gradient(90deg, transparent 0 99px, #8c8c8c 99px 100px) 0 0 / 100% 17px no-repeat,
    repeating-linear-gradient(90deg, transparent 0 49px, #8c8c8c 49px 50px) 0 5px / 100% 12px no-repeat,
    repeating-linear-gradient(90deg, transparent 0 9px, #8c8c8c 9px 10px) 0 12px / 100% 5px no-repeat; }
.ruler-h span { width: 100px; flex: none; padding-left: 1px; font: 10px/13px "Noto Sans", sans-serif; color: #333; }
.ruler-v { grid-area: 2 / 2; border-right: 1px solid #8e8e8e; border-top: 1px solid #6d6d6d; margin-top: -1px;
  background:
    repeating-linear-gradient(transparent 0 49px, #8c8c8c 49px 50px) 4px 0 / 12px 100% no-repeat,
    repeating-linear-gradient(transparent 0 9px, #8c8c8c 9px 10px) 11px 0 / 5px 100% no-repeat #aeaeae; }
.ruler-v span { display: block; width: 9px; writing-mode: vertical-rl; transform: rotate(180deg); font: 10px/9px "Noto Sans", sans-serif; color: #333; padding-bottom: 1px; }
.canvas { grid-area: 2 / 3; background: #b1b1b1; border-bottom: 1px solid #909090; display: flex; justify-content: center; gap: 19px; padding: 14px 32px 0 0; }

.sheetbox { flex: 1; min-height: 0; display: flex; border-top: 10px solid #dadadc; padding-left: 1px; }
.sheet { flex: 1; min-width: 0; overflow: hidden; position: relative; background: #fff; }
table { border-collapse: separate; border-spacing: 0; table-layout: fixed; width: 744px; }
col { width: 72px; }
.c0 { width: 24px; }
tr { height: 19px; }
th, td { padding: 0; border: solid #c0c0c0; border-width: 0 1px 1px 0; }
th { font: 400 10px/17px "DejaVu Sans Mono", monospace; border-bottom-color: #d6d6d8; padding: 1px 2px 0 0; }
.head { height: 20px; }
.head th { border-right-color: #d6d6d8; border-bottom-color: #c0c0c0; padding-top: 2px; }
.first { height: 36px; }
.hot { background: #cff0fb; }
.corner { background: #f5f5f7; }
.corner svg { margin: 0 4px; }
.note { position: relative; color: #f00; font-size: 13px; line-height: 34px; padding-left: 2px; white-space: nowrap; }
.note span { font: 11px "DejaVu Sans Mono", monospace; }
.chart { position: relative; padding: 26px 0; background: #eef6fe; border: 0; box-shadow: inset 0 1px #3d86e8, inset 0 -2px #3d86e8; }
.chart svg { width: 100%; }
.chart::before { content: ""; position: absolute; right: -3px; bottom: -2px; width: 5px; height: 5px; background: #3d86e8; }
.chart::after { content: ""; position: absolute; inset: -4px -1px -2px -3px; border: 3px solid #ff1c0c; border-radius: 3px; }
.lbl, .num { fill: #fff; text-anchor: end; }
.lbl { font: 8px "Noto Sans CJK SC", sans-serif; }
.num { font: 10px Lato, sans-serif; }
.pagebreak { position: absolute; top: 19px; bottom: 0; left: 671px; width: 1px; background: repeating-linear-gradient(#000 0 8px, #fff 8px 11px, #000 11px 13px, #fff 13px 18px); }

.vscroll { width: 17px; display: flex; flex-direction: column; padding-left: 1px; }
.vscroll button { height: 16px; background: #fff; }
.vscroll div { flex: 0 0 283px; background: #e2e2e2; }
.vscroll button:last-child { margin-top: auto; }
.hscroll { height: 16px; flex: none; display: flex; padding: 1px 0 0 1px; gap: 1px; }
.hscroll button { width: 15px; background: #fff; }
.hscroll div { width: 78%; background: #e2e2e2; }
.hscroll button:last-child { margin-left: auto; }

.status { height: 21px; flex: none; display: flex; align-items: center; gap: 7px; padding-left: 1px; }
.sheettab { width: 66px; height: 19px; align-self: flex-start; background: #fff; gap: 4px; color: #444; margin-right: 5px; padding-right: 5px; }
.zoom { margin-left: auto; display: flex; align-items: center; padding-right: 7px; }
.zoom .next { margin-left: 19px; }
.zoom .minus { margin: 0 7px 0 17px; }
.zoom .plus { margin: 0 16px 0 14px; }
.zoom input { appearance: none; width: 214px; height: 12px; background: linear-gradient(#d6d6d8, #d6d6d8) center / 100% 1px no-repeat; }
.zoom input::-webkit-slider-thumb { appearance: none; width: 4px; height: 12px; border-radius: 2px; background: #2b2b2d; }

.strip { width: 40px; flex: none; background: #e8e8e8; position: relative; display: flex; flex-direction: column; align-items: center; padding-top: 27px; }
.strip button { width: 32px; height: 32px; }
.strip .on { border: 3px solid #ff1c0c; border-radius: 4px; background: #f2f2f4; }
.badge { position: absolute; width: 22px; height: 22px; border-radius: 50%; background: #fb4343; color: #fff; font: 14px/22px "Noto Sans", sans-serif; text-align: center; box-shadow: 0 3px 4px #0008; z-index: 1; }
.b1 { left: 208px; top: 4px; }
.b2 { left: 6px; top: -1px; }
.b3 { left: 31px; top: 5px; }

.props { width: 246px; flex: none; }
.phead { height: 27px; display: flex; align-items: center; justify-content: space-between; padding: 0 6px 0 9px; border-bottom: 1px solid #d6d7da; }
.fields { display: grid; grid-template-columns: 60px 1fr; gap: 10px 9px; padding: 10px 10px 11px 9px; align-items: center; }
.fields input { width: 100%; height: 20px; border: 1px solid #d9dade; padding: 0 3px; font: 12px "Noto Sans", sans-serif; background: #fff; }
.ptabs { display: grid; grid-template-columns: repeat(3, 1fr); height: 25px; }
.ptabs button { background: #d9dade; padding-bottom: 2px; }
.ptabs .on { background: #f0f0f2; position: relative; }
.ptabs .on::after { content: ""; position: absolute; inset: -3px 19px 2px 15px; border: 3px solid #ff1c0c; border-radius: 3px; }
.databox { margin: 7px 12px 0 4px; border: 3px solid #ff1c0c; border-radius: 4px; padding: 0 3px 1px 1px; display: flex; flex-direction: column; gap: 6px; }
.f { display: grid; grid-template-columns: 86px 1fr; align-items: center; }
.sub { grid-template-columns: 85px 1fr; padding-left: 13px; }
.pair { display: flex; gap: 4px; }
.dsc { flex: 1; }
.dsc select { padding-left: 20px; }
.combo .dbi { justify-self: start; margin-left: 1px; }
.look { width: 22px; height: 20px; background: #fff; border: 1px solid #d9dade; }
.sort { padding-top: 2px; }
.seg { display: grid; grid-template-columns: repeat(3, 1fr); border: 1px solid #d9dade; background: #fff; }
.seg button { height: 20px; }
.seg .on { background: #3f9bf9; color: #fff; }
```
